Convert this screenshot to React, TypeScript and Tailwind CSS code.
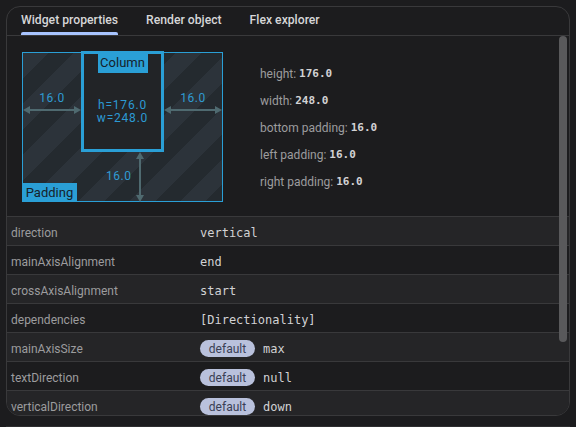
import React from "react";

const rows: { name: string; value: string; isDefault?: boolean }[] = [
  { name: "direction", value: "vertical" },
  { name: "mainAxisAlignment", value: "end" },
  { name: "crossAxisAlignment", value: "start" },
  { name: "dependencies", value: "[Directionality]" },
  { name: "mainAxisSize", value: "max", isDefault: true },
  { name: "textDirection", value: "null", isDefault: true },
  { name: "verticalDirection", value: "down", isDefault: true },
];

const info: [string, string][] = [
  ["height", "176.0"],
  ["width", "248.0"],
  ["bottom padding", "16.0"],
  ["left padding", "16.0"],
  ["right padding", "16.0"],
];

const HArrow = ({ width }: { width: number }) => (
  <svg width={width} height="10" viewBox={`0 0 ${width} 10`} className="block">
    <line x1="3" y1="5" x2={width - 3} y2="5" stroke="#4f6a70" strokeWidth="2" />
    <polygon points="0,5 7,1 7,9" fill="#4f6a70" />
    <polygon points={`${width},5 ${width - 7},1 ${width - 7},9`} fill="#4f6a70" />
  </svg>
);

const VArrow = ({ height }: { height: number }) => (
  <svg width="10" height={height} viewBox={`0 0 10 ${height}`} className="block">
    <line x1="5" y1="3" x2="5" y2={height - 3} stroke="#4f6a70" strokeWidth="2" />
    <polygon points="5,0 1,7 9,7" fill="#4f6a70" />
    <polygon points={`5,${height} 1,${height - 7} 9,${height - 7}`} fill="#4f6a70" />
  </svg>
);

const Diagram = () => (
  <div className="relative w-[201px] h-[150px] border border-[#2a9fd6] bg-[repeating-linear-gradient(135deg,#2c333a_0px,#2c333a_18px,#242a2f_18px,#242a2f_36px)]">
    {/* left padding */}
    <div className="absolute left-0 top-[38px] w-[58px] flex flex-col items-center">
      <span className="text-[12px] leading-[14px] tracking-[0.5px] text-[#2f9bd3]">16.0</span>
      <HArrow width={58} />
    </div>
    {/* right padding */}
    <div className="absolute left-[141px] top-[38px] w-[58px] flex flex-col items-center">
      <span className="text-[12px] leading-[14px] tracking-[0.5px] text-[#2f9bd3]">16.0</span>
      <HArrow width={58} />
    </div>
    {/* bottom padding */}
    <div className="absolute left-[83px] top-[99px] h-[50px] flex items-center gap-[4px]">
      <span className="text-[12px] leading-[14px] tracking-[0.5px] text-[#2f9bd3] mt-[-2px]">16.0</span>
      <VArrow height={50} />
    </div>
    {/* column */}
    <div className="absolute left-[58px] top-[-2px] w-[83px] h-[101px] border-[3px] border-[#2a9fd6] bg-[#222427] flex flex-col items-center">
      <div className="bg-[#2a9fd6] w-[50px] h-[20px] mt-[-1px] flex items-center justify-center text-[13px] text-[#16222b]">
        Column
      </div>
      <div className="mt-[26px] flex flex-col items-center text-[12px] leading-[12.5px] tracking-[0.8px] text-[#2c9ad4]">
        <span>h=176.0</span>
        <span>w=248.0</span>
      </div>
    </div>
    {/* padding label */}
    <div className="absolute left-[-1px] bottom-[-1px] w-[55px] h-[19px] bg-[#2a9fd6] flex items-center justify-center text-[13px] text-[#16222b]">
      Padding
    </div>
  </div>
);

export default function App() {
  return (
    <div className="w-[576px] h-[427px] bg-[#1c1c1e] pt-[6px] px-[6px] overflow-hidden font-['Roboto',sans-serif]">
      <div className="relative h-[410px] border border-[#39393b] rounded-[14px] overflow-hidden flex flex-col">
        {/* tabs */}
        <div className="h-[29px] shrink-0 border-b border-[#39393b] flex items-stretch">
          {["Widget properties", "Render object", "Flex explorer"].map((t, i) => (
            <div key={t} className="px-[14px] flex">
              <div className="relative flex items-center text-[12.2px] font-medium text-[#d6d6d8] pb-[2px]">
                {t}
                {i === 0 && (
                  <div className="absolute left-0 right-0 bottom-0 h-[3px] rounded-t-[2px] bg-[#a8c4ff]" />
                )}
              </div>
            </div>
          ))}
        </div>

        <div className="flex-1 overflow-hidden">
          {/* layout explorer */}
          <div className="h-[181px] border-b border-[#39393b] flex items-start">
            <div className="ml-[15px] mt-[16px]">
              <Diagram />
            </div>
            <div className="ml-[37px] mt-[31px] flex flex-col gap-[13px]">
              {info.map(([k, v]) => (
                <div key={k} className="h-[14px] flex items-center text-[12px] text-[#9c9c9e]">
                  <span>{k}:&nbsp;</span>
                  <span className="font-['DejaVu_Sans_Mono',monospace] font-bold text-[11px] text-[#d2d2d4]">{v}</span>
                </div>
              ))}
            </div>
          </div>

          {/* properties table */}
          {rows.map((r, i) => (
            <div
              key={r.name}
              className={`h-[29px] border-b border-[#39393b] grid grid-cols-[189px_1fr] items-center pl-[4px] pt-[3px] ${
                i % 2 === 0 ? "bg-[#252527]" : "bg-[#1c1c1e]"
              }`}
            >
              <span className="text-[12px] text-[#9c9c9e]">{r.name}</span>
              <div className="flex items-center gap-[8px]">
                {r.isDefault && (
                  <span className="h-[17px] w-[55px] rounded-full bg-[#b9c1dc] text-[#3a3f55] text-[12px] flex items-center justify-center">
                    default
                  </span>
                )}
                <span className="font-['DejaVu_Sans_Mono',monospace] text-[12px] text-[#d2d2d4]">{r.value}</span>
              </div>
            </div>
          ))}
        </div>

        {/* scrollbar */}
        <div className="absolute right-[2px] top-[29px] w-[8px] h-[306px] rounded-[4px] bg-[#59595b]" />
      </div>
      <div className="mt-[10px] border-t border-[#2e2e30]" />
    </div>
  );
}
